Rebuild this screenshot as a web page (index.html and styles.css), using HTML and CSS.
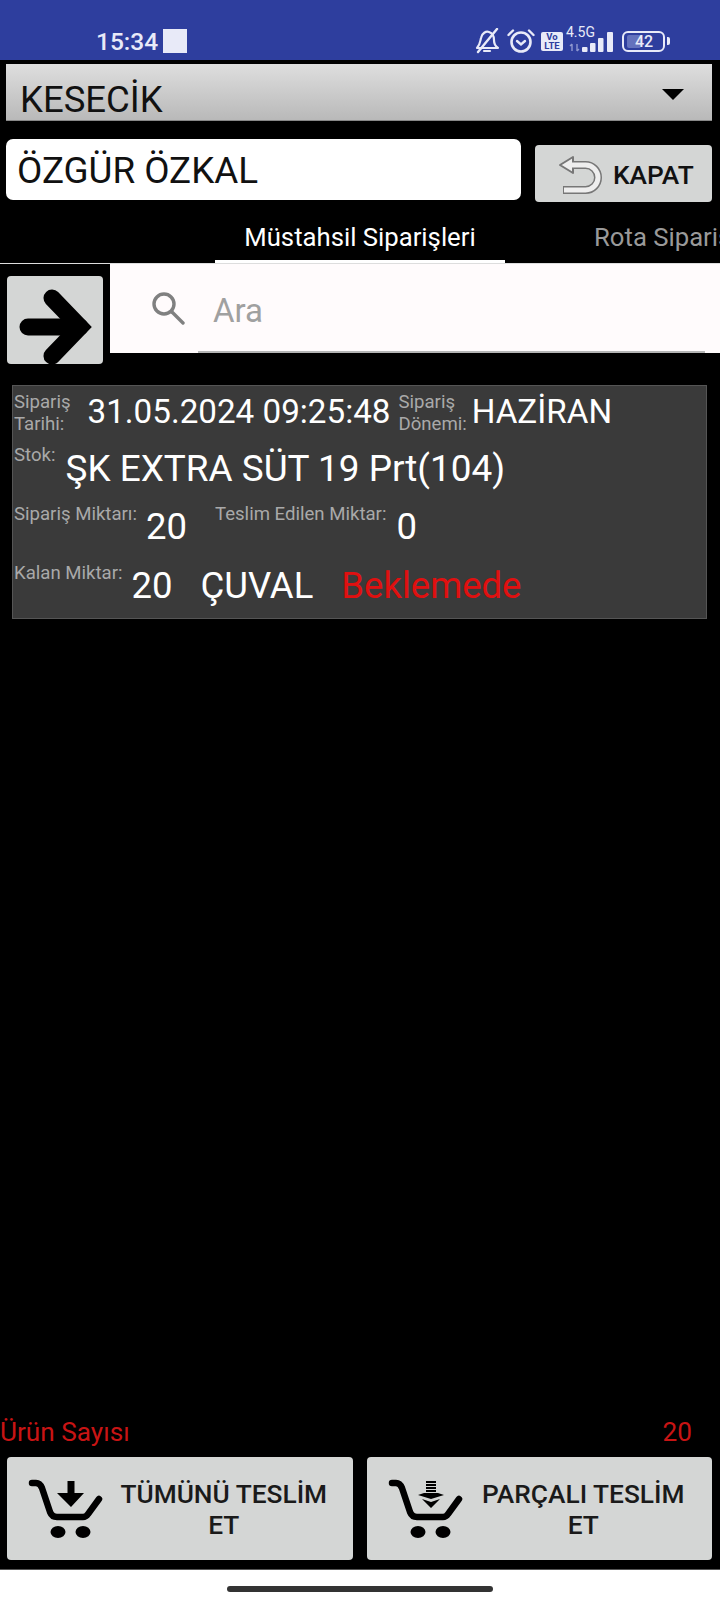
FILE: index.html
```html
<!DOCTYPE html>
<html lang="tr">
<head>
    <meta charset="UTF-8">
    <meta name="viewport" content="width=device-width, initial-scale=1.0">
    <title>Müstahsil Siparişleri</title>
    <link rel="stylesheet" href="styles.css">
</head>
<body>

    <div class="status-bar">
        <span class="clock">15:34</span>
        <span class="clock-box"></span>
        <div class="status-icons">
            <svg class="ic-bell" width="24" height="26" viewBox="0 0 24 26" fill="none" stroke="#e8eaf8" stroke-width="2.2" stroke-linejoin="round" stroke-linecap="round">
                <path d="M2 20 C5 17 5 14 6 10 C7 5 11 3 14 4 C17 5 19 8 19 12 C19 15 20 18 23 20 Z"/>
                <path d="M9 23 H15"/>
                <path d="M3 24 L22 1" stroke-width="2.4"/>
            </svg>
            <svg class="ic-alarm" width="28" height="26" viewBox="0 0 28 26" fill="none" stroke="#e8eaf8" stroke-linecap="round">
                <circle cx="14" cy="14" r="9.5" stroke-width="2.6"/>
                <path d="M1.5 7 L6 2.5 M26.5 7 L22 2.5" stroke-width="2.4"/>
                <path d="M10 13 L14 16.5 L18 13" stroke-width="2.4"/>
            </svg>
            <span class="volte">Vo<br>LTE</span>
            <div class="net">
                <span class="net-label">4.5G</span>
                <svg class="ic-signal" width="50" height="22" viewBox="0 0 50 22">
                    <path d="M7 13 V20 M5 15 L7 13 M12 20 V13 M12 20 L14 18" stroke="#8f98d0" stroke-width="1.4" fill="none"/>
                    <rect x="17" y="16" width="5.5" height="5" rx="1" fill="#e8eaf8"/>
                    <rect x="25" y="12" width="5.5" height="9" rx="1" fill="#e8eaf8"/>
                    <rect x="33" y="7" width="5.5" height="14" rx="1" fill="#e8eaf8"/>
                    <rect x="42" y="1" width="6" height="20" rx="1" fill="#e8eaf8"/>
                </svg>
            </div>
            <div class="battery"><span class="battery-fill"></span><span class="battery-text">42</span></div>
            <span class="battery-tip"></span>
        </div>
    </div>

    <div class="spinner">
        <span>KESECİK</span>
        <span class="spinner-arrow"></span>
    </div>

    <div class="name-row">
        <div class="name-box">ÖZGÜR ÖZKAL</div>
        <div class="close-btn">
            <svg width="48" height="44" viewBox="0 0 48 44" fill="none" stroke-linejoin="round">
                <path d="M16 12 H30.5 A12.5 12.5 0 0 1 30.5 37 H8" stroke="#777" stroke-width="8"/>
                <path d="M5 12 L18 4 V20 Z" fill="#eee" stroke="#777" stroke-width="2"/>
                <path d="M16 12 H30.5 A12.5 12.5 0 0 1 30.5 37 H9" stroke="#eee" stroke-width="5"/>
            </svg>
            <span>KAPAT</span>
        </div>
    </div>

    <div class="tabs">
        <div class="tab active">Müstahsil Siparişleri</div>
        <div class="tab">Rota Siparişleri</div>
    </div>

    <div class="search-row">
        <div class="arrow-btn">
            <svg width="96" height="88" viewBox="0 0 96 88" fill="none" stroke="#000" stroke-width="17">
                <path d="M21 51 H73" stroke-linecap="round"/>
                <path d="M45 22 L73 51 L45 80" stroke-linecap="round"/>
            </svg>
        </div>
        <div class="search">
            <svg class="search-icon" width="34" height="34" viewBox="0 0 34 34" fill="none" stroke="#808080" stroke-width="3.4" stroke-linecap="round">
                <circle cx="13" cy="13" r="10"/>
                <path d="M21 21 L32 32"/>
            </svg>
            <div class="search-field">Ara</div>
        </div>
    </div>

    <div class="card">
        <div class="card-row row-date">
            <span class="label label-date">Sipariş<br>Tarihi:</span>
            <span class="value date-value">31.05.2024 09:25:48</span>
            <span class="label label-term">Sipariş<br>Dönemi:</span>
            <span class="value term-value">HAZİRAN</span>
        </div>
        <div class="card-row row-stock">
            <span class="label">Stok:</span>
            <span class="value stock-value">ŞK EXTRA SÜT 19 Prt(104)</span>
        </div>
        <div class="card-row row-qty">
            <span class="label">Sipariş Miktarı:</span>
            <span class="value qty-value">20</span>
            <span class="label label-delivered">Teslim Edilen Miktar:</span>
            <span class="value delivered-value">0</span>
        </div>
        <div class="card-row row-left">
            <span class="label">Kalan Miktar:</span>
            <span class="value left-value">20</span>
            <span class="value unit-value">ÇUVAL</span>
            <span class="value waiting">Beklemede</span>
        </div>
    </div>

    <div class="spacer"></div>

    <div class="summary">
        <span>Ürün Sayısı</span>
        <span>20</span>
    </div>

    <div class="actions">
        <div class="action-btn">
            <svg class="cart" width="80" height="62" viewBox="0 0 80 62">
                <path d="M4 5 H8 Q12 5 14 10 L22 34 Q24 39 29 39 H55 Q58 39 60 36 L71 21" fill="none" stroke="#000" stroke-width="6.5" stroke-linecap="round"/>
                <ellipse cx="30" cy="54" rx="7.5" ry="6" fill="#000"/>
                <ellipse cx="55" cy="54" rx="7.5" ry="6" fill="#000"/>
                <path d="M39.5 3 H46.5 V15 H56 L43 29 L29 15 H39.5 Z" fill="#000"/>
            </svg>
            <span class="action-text">TÜMÜNÜ TESLİM<br>ET</span>
        </div>
        <div class="action-btn">
            <svg class="cart" width="80" height="62" viewBox="0 0 80 62">
                <path d="M4 5 H8 Q12 5 14 10 L22 34 Q24 39 29 39 H55 Q58 39 60 36 L71 21" fill="none" stroke="#000" stroke-width="6.5" stroke-linecap="round"/>
                <ellipse cx="30" cy="54" rx="7.5" ry="6" fill="#000"/>
                <ellipse cx="55" cy="54" rx="7.5" ry="6" fill="#000"/>
                <path d="M38 4 H48 M38 7 H48 M38 10 H48 M38 13 H48" stroke="#000" stroke-width="1.8"/>
                <path d="M30 17 L36 15 H50 L56 17 L43 21 Z" fill="#000"/>
                <path d="M34 21 L43 24 L52 21 L43 30 Z" fill="#000"/>
            </svg>
            <span class="action-text">PARÇALI TESLİM<br>ET</span>
        </div>
    </div>

    <div class="nav-bar">
        <span class="home-pill"></span>
    </div>

</body>
</html>
```

FILE: styles.css
```css
body {
    margin: 0;
    height: 1600px;
    width: 720px;
    overflow: hidden;
    background: #000;
    color: #fff;
    font-family: Roboto, "Noto Sans", sans-serif;
    display: flex;
    flex-direction: column;
}

/* status bar */
.status-bar {
    height: 38px;
    padding: 22px 0 0 96px;
    background: #2e3e9e;
    color: #e8eaf8;
    display: flex;
    align-items: center;
    flex-shrink: 0;
}
.clock {
    font-size: 24.5px;
    font-weight: 500;
    width: 67px;
}
.clock-box {
    width: 24px;
    height: 24px;
    background: #e8eaf8;
}
.status-icons {
    margin-left: auto;
    width: 245px;
    display: flex;
    align-items: center;
}
.ic-alarm {
    margin-left: 8px;
}
.volte {
    width: 22px;
    height: 19px;
    margin-left: 6px;
    border-radius: 2px;
    background: #e8eaf8;
    color: #2e3e9e;
    font-size: 9.5px;
    line-height: 9.5px;
    font-weight: 700;
    text-align: center;
}
.net {
    position: relative;
    width: 46px;
    height: 24px;
    margin-left: 2px;
}
.net-label {
    position: absolute;
    left: 1px;
    top: -5px;
    font-size: 14px;
}
.ic-signal {
    position: absolute;
    left: 0;
    top: 2px;
}
.battery {
    position: relative;
    width: 39px;
    height: 17px;
    margin-left: 11px;
    border: 2px solid #e8eaf8;
    border-radius: 6px;
}
.battery-fill {
    position: absolute;
    left: 3px;
    top: 2px;
    width: 14px;
    height: 13px;
    background: #6472bd;
    border-radius: 2px;
}
.battery-text {
    position: absolute;
    left: 11px;
    top: -1px;
    font-size: 16px;
    line-height: 19px;
    font-weight: 500;
}
.battery-tip {
    width: 3px;
    height: 8px;
    margin-left: 2px;
    background: #e8eaf8;
    border-radius: 0 2px 2px 0;
}

/* top controls */
.spinner {
    height: 57px;
    margin: 4px 8px 0 6px;
    padding: 14px 28px 0 14px;
    box-sizing: border-box;
    background: linear-gradient(#dedede, #b9b9b9);
    border-bottom: 1px solid #888;
    color: #111;
    font-size: 36.5px;
    display: flex;
    align-items: center;
    justify-content: space-between;
}
.spinner-arrow {
    width: 0;
    height: 0;
    margin-bottom: 9px;
    border-left: 11px solid transparent;
    border-right: 11px solid transparent;
    border-top: 11px solid #000;
}
.name-row {
    margin: 18px 8px 0 6px;
    display: flex;
    gap: 14px;
}
.name-box {
    flex: 1;
    height: 61px;
    padding: 2px 0 0 11px;
    box-sizing: border-box;
    background: #fff;
    border-radius: 7px;
    color: #111;
    font-size: 36.8px;
    line-height: 60px;
}
.close-btn {
    width: 177px;
    height: 57px;
    margin-top: 6px;
    padding-left: 20px;
    box-sizing: border-box;
    background: #d4d6d5;
    border-radius: 4px;
    color: #111;
    font-size: 26.3px;
    font-weight: 500;
    display: flex;
    align-items: center;
    gap: 10px;
}
.close-btn svg {
    margin-top: 2px;
}
.close-btn span {
    margin-top: 3px;
}

/* tabs */
.tabs {
    height: 62px;
    padding-left: 215px;
    box-sizing: border-box;
    border-bottom: 1px solid #ddd;
    overflow: hidden;
    display: flex;
    flex-shrink: 0;
    white-space: nowrap;
    font-size: 25.7px;
    color: #999;
}
.tab {
    flex-shrink: 0;
    height: 62px;
    line-height: 70px;
    padding-left: 89px;
}
.tab.active {
    width: 290px;
    padding: 0;
    box-sizing: border-box;
    border-bottom: 4px solid #fff;
    color: #fff;
    text-align: center;
}

/* search row */
.search-row {
    height: 100px;
    display: flex;
    flex-shrink: 0;
}
.arrow-btn {
    width: 96px;
    height: 88px;
    margin: 12px 0 0 7px;
    background: #d4d6d5;
    border-radius: 4px;
    flex-shrink: 0;
}
.search {
    flex: 1;
    height: 89px;
    margin-left: 7px;
    padding: 0 15px 0 41px;
    background: #fffbfc;
    display: flex;
    align-items: center;
}
.search-icon {
    flex-shrink: 0;
    margin-bottom: 2px;
}
.search-field {
    flex: 1;
    height: 88px;
    margin-left: 13px;
    padding: 2px 0 0 15px;
    box-sizing: border-box;
    border-bottom: 2px solid #b5b5b5;
    color: #a0a0a0;
    font-size: 33px;
    line-height: 88px;
}

/* order card */
.card {
    height: 234px;
    margin: 21px 13px 0 12px;
    padding: 0 0 0 1px;
    box-sizing: border-box;
    background: #3a3a3a;
    border: 1px solid #555;
    flex-shrink: 0;
}
.card-row {
    display: flex;
    align-items: flex-start;
    white-space: nowrap;
}
.label {
    font-size: 18.6px;
    line-height: 22px;
    color: #a9a9a9;
}
.value {
    font-size: 36.5px;
    line-height: 40px;
    color: #fff;
}
.row-date {
    height: 57px;
    padding-top: 5px;
}
.row-date .value {
    font-size: 33.2px;
}
.date-value {
    margin: 1px 0 0 17px;
}
.label-term {
    margin-left: 8px;
}
.term-value {
    margin: 1px 0 0 5px;
}
.row-stock {
    height: 58px;
}
.row-stock .label {
    margin-top: -4px;
}
.row-stock .stock-value {
    margin: 1px 0 0 10px;
    font-size: 36.9px;
}
.row-qty {
    height: 58px;
}
.row-qty .label {
    margin-top: -3px;
}
.qty-value {
    margin: 1px 0 0 9px;
}
.label-delivered {
    margin-left: 28px;
}
.delivered-value {
    margin: 1px 0 0 10px;
}
.row-left .label {
    margin-top: -2px;
}
.left-value {
    margin: 2px 0 0 9px;
}
.unit-value {
    margin: 2px 0 0 28px;
}
.waiting {
    margin: 2px 0 0 28px;
    color: #e01010;
}

/* bottom */
.spacer {
    flex: 1;
}
.summary {
    height: 30px;
    padding: 0 28px 0 0;
    display: flex;
    justify-content: space-between;
    color: #c81414;
    font-size: 26.2px;
    line-height: 24px;
    flex-shrink: 0;
}
.actions {
    margin: 7px 8px 0 7px;
    display: flex;
    gap: 14px;
    flex-shrink: 0;
}
.action-btn {
    flex: 1;
    height: 103px;
    padding-left: 21px;
    box-sizing: border-box;
    background: #d4d6d5;
    border-radius: 4px;
    display: flex;
    align-items: center;
}
.cart {
    flex-shrink: 0;
}
.action-text {
    flex: 1;
    margin-top: 2px;
    padding-right: 13px;
    color: #1a1a1a;
    font-size: 26.3px;
    font-weight: 500;
    line-height: 31px;
    text-align: center;
}
.nav-bar {
    height: 30px;
    margin-top: 9px;
    background: #fff;
    border-top: 1px solid #555;
    display: flex;
    justify-content: center;
    align-items: center;
    flex-shrink: 0;
}
.home-pill {
    width: 266px;
    height: 6px;
    margin-top: 7px;
    background: #333;
    border-radius: 3px;
}
```
